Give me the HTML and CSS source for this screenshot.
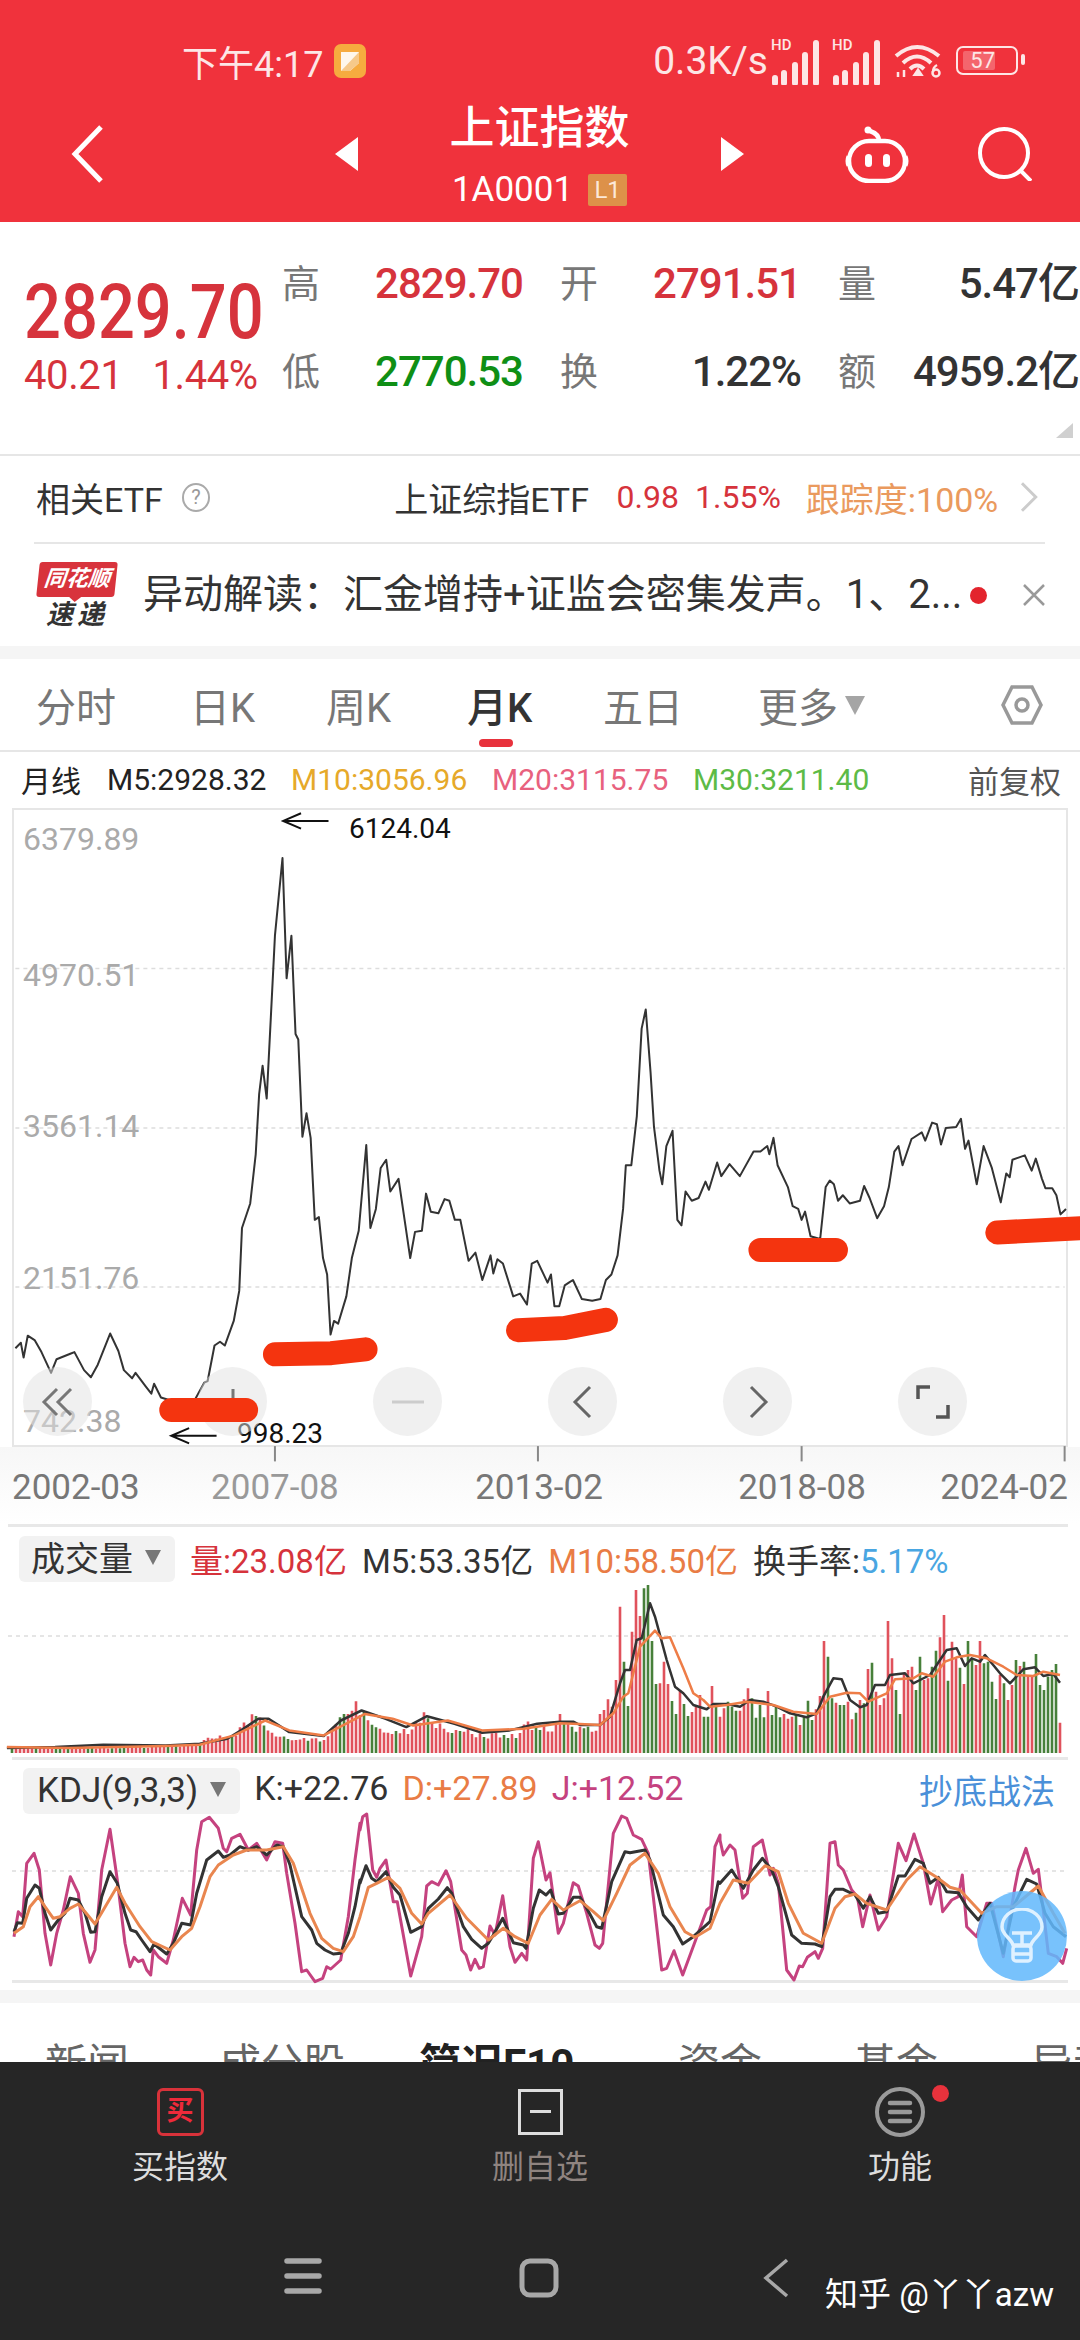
FILE: index.html
```html
<!DOCTYPE html>
<html lang="zh-CN">
<head>
    <meta charset="UTF-8">
    <title>上证指数</title>
    <link rel="stylesheet" href="styles.css">
</head>
<body>

<div class="page">
    <header class="top">
        <div class="status">
            <div class="status-left">
                <span class="clock">下午4:17</span>
                <svg class="note-icon" viewBox="0 0 32 34"><rect width="32" height="34" rx="7" fill="#f6ab3f"/><path d="M7 8h18v11l-9 8H7z" fill="#fff" opacity=".9"/><path d="M7 27l18-19v11l-9 8z" fill="#f6c98a"/></svg>
            </div>
            <div class="status-right">
                <span class="speed">0.3K/s</span>
                <svg class="signal" viewBox="0 0 50 48"><text x="0" y="13" class="hd">HD</text><path d="M4 41v5M13 36v10M24 28v18M34 18v28M45 6v40" stroke="#fde6e6" stroke-width="6" fill="none" stroke-linecap="round"/></svg>
                <svg class="signal" viewBox="0 0 50 48"><text x="0" y="13" class="hd">HD</text><path d="M4 41v5M13 36v10M24 28v18M34 18v28M45 6v40" stroke="#fde6e6" stroke-width="6" fill="none" stroke-linecap="round"/></svg>
                <svg class="wifi" viewBox="0 0 47 34" fill="none" stroke="#fde6e6" stroke-width="4"><path d="M2 12Q23-6 45 12M9 19Q23 6 37 19M16 25Q23 18 30 25"/><path d="M22 30l2-3 2 3z" fill="#fde6e6"/><path d="M4 33v-5M10 33v-7" stroke-width="2.5"/><circle cx="42" cy="29" r="3.5" stroke-width="2.5"/><path d="M39 28q0-5 4-7" stroke-width="2.5"/></svg>
                <div class="battery"><span>57</span></div>
            </div>
        </div>
        <div class="nav">
            <svg class="back" viewBox="0 0 32 58" fill="none" stroke="#fff" stroke-width="5"><path d="M30 2L4 29l26 27"/></svg>
            <svg class="tri" viewBox="0 0 23 34"><path d="M23 0v34L0 17z" fill="#fff"/></svg>
            <div class="title">
                <h1>上证指数</h1>
                <div class="code">1A0001<span class="level">L1</span></div>
            </div>
            <svg class="tri" viewBox="0 0 23 34"><path d="M0 0v34l23-17z" fill="#fff"/></svg>
            <svg class="robot" viewBox="0 0 64 57" fill="none" stroke="#fff" stroke-width="4.5"><rect x="4" y="15" width="56" height="40" rx="20"/><path d="M34 15Q34 8 25 5"/><circle cx="23" cy="4" r="3.5" fill="#fff" stroke="none"/><path d="M3 30q-2 5 0 10M61 30q2 5 0 10" stroke-width="3"/><rect x="20" y="28" width="7" height="13" rx="3.5" fill="#fff" stroke="none"/><rect x="38" y="28" width="7" height="13" rx="3.5" fill="#fff" stroke="none"/></svg>
            <svg class="search" viewBox="0 0 55 54" fill="none" stroke="#fff" stroke-width="4"><circle cx="27" cy="26" r="24"/><path d="M44 44l10 10"/></svg>
        </div>
    </header>

    <section class="quote">
        <div class="quote-main">
            <div class="price">2829.70</div>
            <div class="change"><span>40.21</span><span>1.44%</span></div>
        </div>
        <div class="quote-grid">
            <div class="stat"><span class="stat-name">高</span><span class="up">2829.70</span></div>
            <div class="stat"><span class="stat-name">开</span><span class="up">2791.51</span></div>
            <div class="stat"><span class="stat-name">量</span><span>5.47亿</span></div>
            <div class="stat"><span class="stat-name">低</span><span class="down">2770.53</span></div>
            <div class="stat"><span class="stat-name">换</span><span>1.22%</span></div>
            <div class="stat"><span class="stat-name">额</span><span>4959.2亿</span></div>
        </div>
        <div class="corner"></div>
    </section>

    <section class="etf">
        <span class="etf-name">相关ETF</span>
        <span class="help">?</span>
        <span class="etf-fund">上证综指ETF</span>
        <span class="up etf-num">0.98</span>
        <span class="up etf-num">1.55%</span>
        <span class="etf-track">跟踪度:100%</span>
        <svg class="etf-more" viewBox="0 0 18 30" fill="none" stroke="#ccc" stroke-width="3"><path d="M2 1l14 14L2 29"/></svg>
    </section>

    <section class="news">
        <div class="logo">
            <span class="logo-flag"><span>同花顺</span></span>
            <span class="logo-sub">速递</span>
        </div>
        <p class="news-text">异动解读：汇金增持+证监会密集发声。1、2...</p>
        <span class="dot"></span>
        <svg class="close" viewBox="0 0 22 22" fill="none" stroke="#999" stroke-width="2.5"><path d="M1 1l20 20M21 1L1 21"/></svg>
    </section>

    <div class="band"></div>

    <nav class="periods">
        <span class="period p1">分时</span>
        <span class="period p2">日K</span>
        <span class="period p3">周K</span>
        <span class="period p4 active">月K</span>
        <span class="period p5">五日</span>
        <span class="period p6">更多<i class="caret"></i></span>
        <svg class="hex" viewBox="0 0 42 40" fill="none" stroke="#999" stroke-width="3.5"><path d="M11 2h20l9 18-9 18H11L2 20z"/><circle cx="21" cy="20" r="6"/></svg>
    </nav>

    <div class="ma-row">
        <span class="ma-title">月线</span>
        <span class="ma m5">M5:2928.32</span>
        <span class="ma m10">M10:3056.96</span>
        <span class="ma m20">M20:3115.75</span>
        <span class="ma m30">M30:3211.40</span>
        <span class="adjust">前复权</span>
    </div>

    <div class="chart">
        <svg id="main-chart" class="plot" viewBox="18 270 1532 1162" preserveAspectRatio="none"></svg>
        <span class="axis-y" style="top:10px">6379.89</span>
        <span class="axis-y" style="top:146px">4970.51</span>
        <span class="axis-y" style="top:297px">3561.14</span>
        <span class="axis-y" style="top:449px">2151.76</span>
        <span class="axis-y" style="top:592px">742.38</span>
        <span class="note" style="left:335px;top:3px">6124.04</span>
        <span class="note" style="left:223px;top:608px">998.23</span>
        <div class="chart-btns">
            <span class="round"><svg viewBox="0 0 36 36" fill="none" stroke="#777" stroke-width="3"><path d="M17 5L4 18l13 13M31 5L18 18l13 13"/></svg></span>
            <span class="round"><svg viewBox="0 0 36 36" fill="none" stroke="#777" stroke-width="3"><path d="M18 5v26M5 18h26"/></svg></span>
            <span class="round"><svg viewBox="0 0 36 36" fill="none" stroke="#ccc" stroke-width="3"><path d="M2 18h32"/></svg></span>
            <span class="round"><svg viewBox="0 0 36 36" fill="none" stroke="#666" stroke-width="3"><path d="M25 3L10 18l15 15"/></svg></span>
            <span class="round"><svg viewBox="0 0 36 36" fill="none" stroke="#666" stroke-width="3"><path d="M11 3l15 15-15 15"/></svg></span>
            <span class="round"><svg viewBox="0 0 36 36" fill="none" stroke="#555" stroke-width="3.5"><path d="M3 15V3h12M33 21v12H21"/></svg></span>
        </div>
        <svg id="marks" class="plot" viewBox="18 270 1532 1162" preserveAspectRatio="none"></svg>
    </div>

    <div class="axis-x">
        <span>2002-03</span>
        <span class="fade">2007-08</span>
        <span>2013-02</span>
        <span>2018-08</span>
        <span>2024-02</span>
    </div>

    <section class="panel vol">
        <svg id="vol-chart" class="plot" viewBox="8 1527 1060 230"></svg>
        <div class="panel-head">
            <span class="chip">成交量<i class="caret"></i></span>
            <span class="up">量:23.08亿</span>
            <span>M5:53.35亿</span>
            <span class="orange">M10:58.50亿</span>
            <span>换手率:<span class="blue">5.17%</span></span>
        </div>
    </section>

    <section class="panel kdj">
        <svg id="kdj-chart" class="plot" viewBox="12 1760 1056 220"></svg>
        <div class="panel-head">
            <span class="chip">KDJ(9,3,3)<i class="caret"></i></span>
            <span>K:+22.76</span>
            <span class="orange">D:+27.89</span>
            <span class="pink">J:+12.52</span>
            <span class="kdj-link">抄底战法</span>
        </div>
        <div class="bulb">
            <svg viewBox="0 0 44 56" fill="none" stroke="#dff1ff" stroke-width="3.5"><path d="M13 37C11 30 2 27 2 19a20 18 0 0 1 40 0c0 8-9 11-11 18z"/><path d="M12 25h20M22 25v12"/><rect x="13" y="38" width="18" height="15" rx="3"/><path d="M14 46h16"/></svg>
        </div>
    </section>

    <div class="band band-low"></div>

    <nav class="infos">
        <span class="info i1">新闻</span>
        <span class="info i2">成分股</span>
        <span class="info i3 active">简况F10</span>
        <span class="info i4">资金</span>
        <span class="info i5">基金</span>
        <span class="info i6">异动</span>
    </nav>

    <footer class="bottom">
        <div class="actions">
            <div class="action">
                <span class="buy-box">买</span>
                <span class="action-text">买指数</span>
            </div>
            <div class="action">
                <span class="del-box"></span>
                <span class="action-text muted">删自选</span>
            </div>
            <div class="action">
                <span class="more-box">
                    <svg viewBox="0 0 50 50" fill="none" stroke="#9a9a9a"><circle cx="25" cy="25" r="23" stroke-width="4"/><path d="M15 16h20M15 25h20M15 34h20" stroke-width="4.5" stroke-linecap="round"/></svg>
                    <i class="badge"></i>
                </span>
                <span class="action-text">功能</span>
            </div>
        </div>
        <div class="sysbar">
            <svg class="sys-menu" viewBox="0 0 38 36"><path d="M3 3h32M3 18h32M3 33h32" stroke="#a8a8a8" stroke-width="5.5" stroke-linecap="round"/></svg>
            <svg class="sys-home" viewBox="0 0 40 40" fill="none"><rect x="3" y="3" width="34" height="34" rx="8" stroke="#a8a8a8" stroke-width="5"/></svg>
            <svg class="sys-back" viewBox="0 0 26 40" fill="none"><path d="M24 2L3 20l21 18" stroke="#a8a8a8" stroke-width="3.5"/></svg>
            <span class="mark">知乎 @丫丫azw</span>
        </div>
    </footer>
</div>

<script src="charts.js"></script>
</body>
</html>
```

FILE: styles.css
```css
* {
    box-sizing: border-box;
}

body {
    margin: 0;
    background: #fff;
    font-family: Roboto, "Noto Sans CJK SC", sans-serif;
    color: #333;
    overflow: hidden;
}

.page {
    width: 1080px;
    height: 2340px;
    display: flex;
    flex-direction: column;
    overflow: hidden;
}

.up { color: #d6333c; }
.down { color: #0f8f15; }
.orange { color: #e97c45; }
.blue { color: #49a6e2; }
.pink { color: #c5427f; }

.caret {
    display: inline-block;
    width: 0;
    height: 0;
    border-left: 10px solid transparent;
    border-right: 10px solid transparent;
    border-top: 19px solid #a5a5a5;
}

/* Red header */
.top {
    height: 222px;
    background: #f0323c;
    color: #fff;
    display: flex;
    flex-direction: column;
}

.status {
    height: 100px;
    padding: 21px 56px 0 182px;
    display: flex;
    justify-content: space-between;
    align-items: center;
    color: #fde6e6;
}

.status-left, .status-right {
    display: flex;
    align-items: center;
}

.clock {
    font-size: 36px;
    margin-right: 11px;
}

.note-icon {
    width: 32px;
    height: 34px;
}

.speed {
    font-size: 39px;
    margin-right: 3px;
}

.signal {
    width: 50px;
    height: 48px;
    margin-right: 11px;
}

.hd {
    font-size: 15px;
    font-weight: 500;
    fill: #fde6e6;
}

.wifi {
    width: 47px;
    height: 34px;
    margin: 0 15px 0 1px;
}

.battery {
    width: 62px;
    height: 29px;
    margin-right: 6px;
    border: 2.5px solid #fde6e6;
    border-radius: 7px;
    font-size: 22px;
    position: relative;
    display: flex;
    align-items: center;
    padding-left: 5px;
}

.battery span {
    width: 32px;
    height: 19px;
    line-height: 19px;
    text-align: right;
    background: rgba(255, 255, 255, 0.25);
    border-radius: 2px;
}

.battery::after {
    content: "";
    position: absolute;
    right: -9px;
    top: 6px;
    width: 4px;
    height: 11px;
    background: #fde6e6;
    border-radius: 2px;
}

.nav {
    height: 122px;
    position: relative;
    display: flex;
    align-items: center;
    padding: 0 0 14px 71px;
}

.back {
    width: 32px;
    height: 58px;
    margin-right: 232px;
}

.tri {
    width: 23px;
    height: 34px;
}

.title {
    width: 363px;
    text-align: center;
}

.title h1 {
    margin: 0;
    font-size: 45px;
    font-weight: 500;
    line-height: 56px;
}

.code {
    margin-top: 15px;
    font-size: 35px;
    line-height: 36px;
    display: flex;
    justify-content: center;
    align-items: center;
    gap: 15px;
}

.level {
    width: 39px;
    height: 32px;
    line-height: 32px;
    background: #dd9149;
    border-radius: 2px;
    font-size: 24px;
    color: #fce8d8;
}

.robot {
    width: 64px;
    height: 57px;
    margin: 0 68px 0 101px;
}

.search {
    width: 55px;
    height: 54px;
}

/* Quote block */
.quote {
    height: 232px;
    position: relative;
    display: flex;
    padding: 38px 0 0 24px;
}

.quote-main {
    width: 258px;
    flex: none;
}

.price {
    font-size: 65px;
    font-weight: 500;
    line-height: 76px;
    color: #d6333c;
    transform: scaleY(1.16);
    transform-origin: top;
    margin-top: 8px;
    white-space: nowrap;
}

.change {
    margin-top: 10px;
    font-size: 40px;
    letter-spacing: -0.4px;
    line-height: 44px;
    color: #d6333c;
    display: flex;
    gap: 30px;
    white-space: nowrap;
}

.quote-grid {
    display: grid;
    grid-template-columns: repeat(3, 241px);
    column-gap: 37px;
    grid-auto-rows: 88px;
    font-size: 42px;
    font-weight: 500;
    letter-spacing: -1px;
    line-height: 48px;
    color: #333;
}

.stat {
    display: flex;
    justify-content: space-between;
}

.stat-name {
    color: #777;
    font-size: 38px;
    font-weight: 400;
    letter-spacing: 0;
}

.corner {
    position: absolute;
    right: 7px;
    bottom: 16px;
    width: 0;
    height: 0;
    border-left: 17px solid transparent;
    border-bottom: 15px solid #d0d0d0;
}

/* ETF row */
.etf {
    height: 88px;
    border-top: 2px solid #e6e6e6;
    display: flex;
    align-items: center;
    padding: 0 42px 4px 36px;
    font-size: 34px;
    white-space: nowrap;
}

.etf-name {
    width: 148px;
    font-size: 34px;
}

.help {
    width: 29px;
    height: 29px;
    border: 2px solid #aaa;
    border-radius: 50%;
    font-size: 20px;
    line-height: 25px;
    text-align: center;
    color: #999;
}

.etf-fund {
    margin-left: 184px;
    width: 226px;
}

.etf-num {
    margin-right: 16px;
    font-size: 32px;
}

.etf-track {
    margin-left: 9px;
    color: #ea9a5e;
}

.etf-more {
    width: 18px;
    height: 30px;
    margin-left: 22px;
}

/* News row */
.news {
    height: 104px;
    margin: 0 35px 0 34px;
    border-top: 2px solid #e6e6e6;
    display: flex;
    align-items: center;
}

.logo {
    width: 82px;
    margin-left: 2px;
    display: flex;
    flex-direction: column;
    align-items: center;
    font-style: italic;
    font-weight: 700;
}

.logo-flag {
    width: 78px;
    height: 35px;
    line-height: 33px;
    background: #d8333c;
    border-radius: 3px;
    color: #fff;
    font-size: 22px;
    text-align: center;
    white-space: nowrap;
    transform: skewX(-6deg);
    position: relative;
}

.logo-flag::after {
    content: "";
    position: absolute;
    left: 33px;
    bottom: -5px;
    border-left: 6px solid transparent;
    border-right: 6px solid transparent;
    border-top: 5px solid #d8333c;
}

.logo-sub {
    font-size: 27px;
    line-height: 28px;
    letter-spacing: 4px;
    margin-top: 4px;
    color: #333;
}

.news-text {
    margin: 0 0 0 25px;
    width: 826px;
    font-size: 40px;
    line-height: 48px;
    white-space: nowrap;
    overflow: hidden;
}

.dot {
    width: 17px;
    height: 17px;
    border-radius: 50%;
    background: #e3242d;
    margin-left: 1px;
}

.close {
    width: 22px;
    height: 22px;
    margin-left: 36px;
}

.band {
    height: 13px;
    background: #f5f5f5;
}

/* Period tabs */
.periods {
    height: 93px;
    position: relative;
    border-bottom: 2px solid #e6e6e6;
    font-size: 40px;
    color: #777;
    display: flex;
    align-items: center;
    padding-left: 36px;
}

.period {
    white-space: nowrap;
    flex: none;
}

.p1 { width: 154px; }
.p2 { width: 136px; }
.p3 { width: 141px; }
.p4 { width: 136px; }
.p5 { width: 155px; }
.p6 { width: 243px; }

.period.active {
    color: #333;
    font-weight: 500;
    position: relative;
}

.period.active::after {
    content: "";
    position: absolute;
    left: 12px;
    top: 63px;
    width: 34px;
    height: 8px;
    border-radius: 4px;
    background: #e8323c;
}

.p6 .caret {
    margin-left: 7px;
    vertical-align: 7px;
}

.hex {
    width: 42px;
    height: 40px;
}

/* MA values */
.ma-row {
    height: 54px;
    display: flex;
    align-items: center;
    font-size: 30px;
    color: #222;
    padding: 0 19px 0 21px;
    white-space: nowrap;
}

.ma-title {
    width: 86px;
}

.ma { flex: none; }
.m5 { width: 184px; color: #222; }
.m10 { width: 201px; color: #e6a92a; }
.m20 { width: 201px; color: #e8617e; }
.m30 { width: 275px; color: #5dbb46; }

.adjust {
    font-size: 31px;
    color: #555;
}

/* Main chart */
.chart {
    height: 639px;
    margin: 2px 12px 0;
    border: 2px solid #e6e6e6;
    position: relative;
}

.plot {
    position: absolute;
    left: 0;
    top: 0;
    width: 100%;
    height: 100%;
    overflow: visible;
}

.plot * {
    vector-effect: non-scaling-stroke;
}

.axis-y {
    position: absolute;
    left: 9px;
    font-size: 32px;
    line-height: 38px;
    color: #aaa;
}

.note {
    position: absolute;
    font-size: 28px;
    line-height: 32px;
    color: #111;
}

.chart-btns {
    position: absolute;
    left: 9px;
    top: 557px;
    display: flex;
    gap: 106px;
}

.round {
    width: 69px;
    height: 69px;
    border-radius: 50%;
    background: rgba(225, 225, 225, 0.5);
    display: flex;
    align-items: center;
    justify-content: center;
}

.round svg {
    width: 36px;
    height: 36px;
}

.axis-x {
    height: 77px;
    display: flex;
    justify-content: space-between;
    align-items: center;
    padding: 4px 12px 0;
    font-size: 35px;
    color: #777;
    background: linear-gradient(#f7f7f7, #fff);
}

.axis-x span { white-space: nowrap; }
.axis-x span:first-child { width: 199px; }
.axis-x span:nth-child(2) { width: 264px; }
.axis-x span:nth-child(3) { width: 263px; }
.axis-x span:nth-child(4) { width: 202px; }

.axis-x .fade {
    color: #999;
}

/* Lower panels */
.panel {
    position: relative;
    margin: 0 12px 0 8px;
    border-top: 3px solid #e8e8e8;
}

.vol { height: 233px; }

.kdj {
    height: 226px;
    margin-left: 12px;
    border-bottom: 3px solid #e8e8e8;
}

.panel-head {
    position: relative;
    display: flex;
    align-items: center;
    gap: 15px;
    font-size: 33px;
    color: #333;
    padding: 8px 0 0 11px;
    white-space: nowrap;
}

.chip {
    height: 46px;
    line-height: 46px;
    padding: 0 14px 0 12px;
    background: #f2f2f2;
    border-radius: 6px;
    font-size: 34px;
    display: flex;
    align-items: center;
}

.chip .caret {
    margin-left: 12px;
    border-left-width: 8px;
    border-right-width: 8px;
    border-top-width: 15px;
    margin-top: -3px;
    border-top-color: #777;
}

.kdj .chip {
    font-size: 35px;
    padding: 0 14px;
}

.kdj .panel-head {
    gap: 14px;
    font-size: 34px;
    align-items: flex-start;
}

.kdj-link {
    position: absolute;
    right: 13px;
    top: 5px;
    font-size: 34px;
    color: #4a90d9;
}

.bulb {
    position: absolute;
    right: 1px;
    top: 131px;
    width: 90px;
    height: 90px;
    border-radius: 50%;
    background: rgba(98, 184, 252, 0.86);
    display: flex;
    align-items: center;
    justify-content: center;
}

.bulb svg {
    width: 44px;
    height: 56px;
}

.band-low {
    margin-top: 7px;
}

/* Info tabs, cut off by the bottom bar */
.infos {
    height: 59px;
    overflow: hidden;
    display: flex;
    align-items: flex-start;
    font-size: 42px;
    line-height: 56px;
    color: #666;
    padding: 34px 0 0 45px;
    white-space: nowrap;
}

.info { flex: none; }
.i1 { width: 174px; }
.i2 { width: 200px; }
.i3 { width: 259px; font-weight: 700; color: #222; }
.i4 { width: 176px; }
.i5 { width: 177px; }

/* Dark bottom bar */
.bottom {
    flex: 1;
    background: #262626;
    display: flex;
    flex-direction: column;
}

.actions {
    height: 160px;
    display: flex;
    padding-top: 26px;
}

.action {
    width: 360px;
    display: flex;
    flex-direction: column;
    align-items: center;
}

.buy-box {
    width: 47px;
    height: 48px;
    border: 3px solid #d8323a;
    border-radius: 6px;
    color: #ee2a3a;
    font-size: 27px;
    line-height: 41px;
    font-weight: 700;
    text-align: center;
}

.del-box {
    width: 45px;
    height: 46px;
    margin-top: 1px;
    margin-bottom: 1px;
    border: 3px solid #ddd;
    position: relative;
}

.del-box::after {
    content: "";
    position: absolute;
    left: 9px;
    top: 18px;
    width: 21px;
    height: 3px;
    background: #ddd;
}

.more-box {
    width: 50px;
    height: 50px;
    margin-top: -1px;
    margin-bottom: -1px;
    position: relative;
}

.more-box svg {
    width: 50px;
    height: 50px;
}

.badge {
    position: absolute;
    left: 57px;
    top: -2px;
    width: 17px;
    height: 17px;
    border-radius: 50%;
    background: #e8323c;
}

.action-text {
    margin-top: 12px;
    font-size: 32px;
    line-height: 38px;
    color: #ddd;
}

.action-text.muted {
    color: #8f8480;
}

.sysbar {
    flex: 1;
    position: relative;
    display: flex;
    align-items: flex-start;
    padding: 36px 0 0 284px;
}

.sys-menu {
    width: 38px;
    height: 36px;
}

.sys-home {
    width: 40px;
    height: 40px;
    margin-left: 197px;
}

.sys-back {
    width: 26px;
    height: 40px;
    margin-left: 204px;
}

.mark {
    position: absolute;
    left: 825px;
    top: 55px;
    font-size: 33px;
    line-height: 36px;
    color: #fff;
}
```

FILE: charts.js
```js
// Points were read off crops of the reference, so each set keeps its crop units
const NS = 'http://www.w3.org/2000/svg';

const mainLine = [20,1255,28,1245,32,1272,38,1232,48,1240,58,1262,72,1300,80,1275,100,1265,106,1262,120,1295,130,1308,140,1285,158,1228,170,1260,178,1295,190,1310,195,1300,210,1325,218,1338,222,1320,232,1345,245,1350,262,1348,282,1348,295,1318,300,1315,310,1250,318,1243,325,1250,338,1205,346,1150,350,1035,362,990,370,900,375,790,380,738,386,798,392,650,398,500,409,358,415,578,422,500,428,680,432,690,438,868,444,825,450,870,456,1020,462,1015,468,1090,474,1120,479,1230,484,1205,490,1210,502,1160,510,1090,520,1040,531,883,537,1035,545,1000,552,925,560,910,566,968,578,945,588,1030,595,1090,602,1042,612,1040,618,972,625,1005,636,1008,645,982,652,985,660,1020,668,1020,680,1095,690,1080,700,1130,712,1085,716,1118,722,1092,730,1100,745,1160,755,1155,765,1175,772,1100,780,1095,795,1135,800,1120,805,1178,812,1178,820,1140,826,1135,832,1130,845,1165,860,1168,872,1165,880,1130,888,1120,897,1085,905,1000,909,920,917,920,925,830,932,670,938,635,945,750,950,850,958,930,962,955,968,885,977,857,984,1020,990,1030,996,968,1005,985,1015,980,1025,950,1030,965,1042,915,1048,940,1060,918,1075,940,1095,895,1105,895,1115,885,1118,900,1124,870,1130,920,1145,960,1152,995,1160,1000,1165,1020,1170,1005,1178,1050,1192,1055,1200,960,1206,948,1212,955,1218,985,1225,975,1235,990,1250,985,1256,958,1264,980,1275,1017,1285,995,1292,960,1300,895,1306,885,1312,920,1325,872,1340,860,1345,875,1355,842,1362,845,1368,882,1375,852,1390,850,1397,835,1403,890,1408,875,1420,955,1430,885,1442,925,1455,988,1463,935,1468,942,1472,910,1490,902,1500,930,1506,908,1515,945,1520,962,1530,962,1536,975,1542,1010,1550,1000];

// Hand-drawn marks on top of the chart
const redMarks = [
    [247,1368,356,1368],
    [398,1266,480,1264,530,1257],
    [752,1222,820,1218,880,1203],
    [1105,1075,1215,1075],
    [1450,1043,1575,1035]
];

// Volume, left part: coarse outline only
const volTopLeft = [10,745,130,745,240,740,290,735,300,715,340,700,365,645,375,650,385,665,400,700,440,715,470,720,490,635,520,600,530,640,560,680,590,690,615,625,640,670,700,700,750,705,765,660,800,680,820,640];
const volM5Left = [10,748,80,745,150,738,240,740,290,735,330,720,350,695,375,660,390,660,420,700,470,712,495,665,525,635,560,660,590,685,620,652,660,675,700,702,740,695,780,675];
const volM10Left = [10,745,100,748,240,742,290,738,340,710,385,665,420,695,470,710,530,645,570,660,600,680,650,665,700,695,760,690];

// Volume, right part: one bar every 4px from x=560
const volBars = 'r462 g490 r490 g500 g515 r500 g505 g500 r515 r512 r462 r450 r418 r440 r360 r140 g305 g438 r215 r90 r168 g85 g75 g243 g372 r370 r305 r372 g423 g462 r390 g432 g468 r456 r435 r405 g470 g470 r378 g430 r470 r445 g425 g440 g452 r452 r418 r385 g415 g473 g435 g472 r393 g465 g440 g472 r462 r476 r470 g465 r495 g470 g422 g480 r448 r408 r243 g290 g415 r428 g435 g435 r425 r478 g458 r420 g430 r327 g308 r395 r435 r415 r183 r295 g390 g462 r338 r330 r320 g390 g290 r360 r355 g320 g272 r232 r165 g362 r245 r295 g323 r372 g243 g300 r315 r243 g310 g305 g365 g417 r345 g370 r420 r375 g300 r318 g305 r345 r345 g282 g375 g390 g350 g330 g312 r488'.split(' ');
const volM5Right = [0,485,40,485,60,495,120,495,150,470,180,370,195,330,210,330,230,240,245,235,270,130,285,170,320,300,345,380,370,400,400,435,440,448,460,432,500,432,540,440,570,420,610,425,650,440,690,460,740,472,770,460,790,410,820,355,845,358,870,420,900,442,920,435,945,375,975,375,990,345,1035,340,1060,370,1080,360,1110,345,1160,270,1190,265,1215,318,1235,295,1260,305,1275,285,1320,340,1350,370,1390,328,1425,322,1450,348,1480,342,1500,368];
const volM10Right = [0,490,60,492,120,495,160,460,190,410,205,400,240,260,285,212,305,235,330,232,370,325,400,400,430,420,450,440,500,435,560,425,640,435,700,455,770,462,810,410,860,398,900,400,925,425,980,400,1005,358,1060,355,1085,340,1120,350,1155,305,1190,292,1230,285,1280,295,1330,320,1370,345,1420,348,1450,335,1500,345];

// KDJ, three 360px wide crops at 3x
const kdjJ = [
    [0, [42,410,55,335,68,350,80,190,102,160,118,210,135,400,152,495,170,400,190,330,211,230,235,280,250,400,270,487,285,450,305,210,330,88,352,240,375,430,390,500,402,472,415,485,428,480,440,510,452,525,460,450,475,470,500,490,520,420,547,295,572,345,590,150,605,65,628,52,655,85,670,145,680,155,695,115,720,103,745,150,770,130,800,180,825,125,848,130,860,220,885,370,905,515,920,510,945,545,968,535,980,500,992,507,1022,480,1045,350,1065,180,1080,70]],
    [360, [0,90,8,50,20,42,38,210,50,232,60,205,78,180,100,305,112,305,152,528,185,410,200,258,215,245,235,255,258,212,272,245,305,450,318,465,332,510,345,478,358,505,370,500,390,378,405,405,428,287,450,440,465,487,485,460,500,480,520,175,535,125,558,240,570,218,595,400,610,370,640,248,655,258,680,340,705,435,718,445,728,430,760,100,785,48,800,55,820,105,845,118,865,160,905,510,920,505,942,452,968,525,1005,425,1040,330,1052,320,1065,140,1080,105]],
    [720, [0,120,10,165,30,135,45,150,68,295,82,280,100,140,127,120,150,225,160,205,175,250,200,510,222,540,238,498,248,500,262,472,285,455,295,475,308,445,330,130,345,125,355,195,370,210,395,270,412,290,428,380,450,285,475,390,500,350,535,130,558,182,582,102,610,190,632,312,655,235,668,335,695,300,715,290,727,225,740,380,770,410,800,310,815,310,850,470,885,260,895,210,918,145,940,220,955,208,965,290,985,460,1010,470,1028,490,1040,445]]
];
const kdjK = [
    [0, [42,395,52,368,68,370,80,295,105,255,118,265,135,340,152,390,175,360,195,340,210,295,235,300,255,340,272,397,285,395,305,290,330,215,352,250,375,340,392,390,408,395,425,420,450,455,462,432,500,462,520,430,545,370,572,375,590,280,620,180,655,153,670,172,690,165,720,140,745,150,770,140,800,165,830,135,850,140,870,195,905,350,935,390,950,430,975,450,1000,462,1022,460,1045,400,1065,320,1080,240]],
    [360, [0,250,18,197,35,235,50,245,78,215,100,262,120,285,152,397,185,380,205,325,235,297,262,263,275,280,310,380,335,418,365,445,385,430,400,405,428,355,460,428,490,435,498,445,520,325,538,270,558,285,572,270,595,342,610,340,640,292,660,292,680,325,710,380,725,385,755,245,795,155,810,158,855,150,870,180,910,345,940,380,968,432,1000,410,1050,365,1075,245]],
    [720, [0,250,35,210,70,265,100,210,127,175,155,210,175,260,215,405,245,430,285,432,305,440,330,290,345,268,370,268,405,285,430,325,450,290,475,340,500,335,535,228,555,228,585,178,610,190,630,250,655,232,680,275,715,278,740,320,775,360,810,310,850,460,880,320,920,238,950,252,975,340,1000,380,1038,410]]
];
const kdjD = [
    [0, [42,400,70,380,90,320,115,290,135,320,160,355,180,350,210,325,235,312,255,335,285,372,310,330,350,262,375,310,420,380,455,425,510,450,545,410,575,385,600,320,630,230,655,195,700,165,740,150,800,150,850,140,880,190,930,340,965,415,1000,445,1030,455,1060,410,1080,350]],
    [360, [0,350,25,262,50,250,85,232,120,265,155,340,185,372,205,340,270,285,320,355,385,420,430,385,465,410,505,430,540,345,575,298,610,330,660,302,700,335,730,362,770,280,810,195,855,160,895,220,930,320,975,395,1005,412,1050,385,1080,310]],
    [720, [0,310,40,240,85,250,135,197,175,215,205,310,250,400,305,430,345,325,375,290,405,282,440,310,500,330,560,240,600,200,650,232,690,262,720,270,785,340,830,320,880,320,955,258,1000,340,1035,400]]
];

function addEl(svg, tag, attrs) {
    const el = document.createElementNS(NS, tag);
    for (const key in attrs) el.setAttribute(key, attrs[key]);
    svg.appendChild(el);
    return el;
}

function addLine(svg, pts, color, width) {
    addEl(svg, 'polyline', {
        points: pts.join(' '),
        fill: 'none',
        stroke: color,
        'stroke-width': width,
        'stroke-linejoin': 'round'
    });
}

function addGrid(svg, y, x1, x2) {
    addEl(svg, 'path', {
        d: `M${x1} ${y}H${x2}`,
        stroke: '#ddd',
        'stroke-width': 1.5,
        'stroke-dasharray': '4 4'
    });
}

function envelope(pts, x) {
    for (let i = 0; i < pts.length - 2; i += 2) {
        if (x <= pts[i + 2]) {
            const t = (x - pts[i]) / (pts[i + 2] - pts[i]);
            return pts[i + 1] + (pts[i + 3] - pts[i + 1]) * t;
        }
    }
    return pts[pts.length - 1];
}

// Crop units to page pixels
function toPage(pts, ox, oy, sx, sy) {
    return pts.map((v, i) => +(i % 2 ? oy + v / sy : ox + v / sx).toFixed(1));
}
const wide = (pts) => toPage(pts, 0, 1500, 1.452, 3.016);
const right = (pts) => toPage(pts, 560, 1560, 3, 3);
const kdj = (segs) => segs.flatMap(([ox, pts]) => toPage(pts, ox, 1800, 3, 3));

// Main price chart
const mainSvg = document.getElementById('main-chart');
[560, 852, 1143].forEach(y => addGrid(mainSvg, y, 20, 1548));
[398, 781, 1165, 1548].forEach(x => addEl(mainSvg, 'path', {
    d: `M${x} 1434V1462`, stroke: '#888', 'stroke-width': 2
}));
addLine(mainSvg, mainLine, '#333', 2);

const marksSvg = document.getElementById('marks');
redMarks.forEach(m => addEl(marksSvg, 'polyline', {
    points: m.join(' '), fill: 'none', stroke: '#f4340f',
    'stroke-width': 24, 'stroke-linecap': 'round', 'stroke-linejoin': 'round'
}));
addEl(marksSvg, 'path', {
    d: 'M476 290H412M436 276L410 290L436 304M313 1415H249M273 1401L247 1415L273 1429',
    fill: 'none', stroke: '#111', 'stroke-width': 2
});

// Volume bars: up and down months go in one path each
const volSvg = document.getElementById('vol-chart');
const VOL_BOTTOM = 1753;
addGrid(volSvg, 1636, 8, 1068);
let redPath = '', greenPath = '';
for (let x = 556; x > 8; x -= 4) {
    const i = x / 4;
    const top = 1500 + envelope(volTopLeft, x * 1.452) / 3.016;
    const wobble = Math.abs(Math.sin(i * 12.9898) * 43758.5453) % 1;
    const barTop = top + (VOL_BOTTOM - top) * wobble * 0.3;
    const seg = `M${x} ${VOL_BOTTOM}V${barTop.toFixed(1)}`;
    if (Math.sin(i * 0.9) + Math.sin(i * 2.3) > 0.7) greenPath += seg; else redPath += seg;
}
volBars.forEach((bar, i) => {
    const seg = `M${560 + i * 4} ${VOL_BOTTOM}V${(1560 + bar.slice(1) / 3).toFixed(1)}`;
    if (bar[0] === 'g') greenPath += seg; else redPath += seg;
});
addEl(volSvg, 'path', { d: redPath, stroke: '#e0525c', 'stroke-width': 2.6, fill: 'none' });
addEl(volSvg, 'path', { d: greenPath, stroke: '#47803a', 'stroke-width': 2.6, fill: 'none' });
addLine(volSvg, wide(volM5Left).concat(right(volM5Right)), '#333', 2.5);
addLine(volSvg, wide(volM10Left).concat(right(volM10Right)), '#ee7d47', 2.5);

// KDJ lines
const kdjSvg = document.getElementById('kdj-chart');
addGrid(kdjSvg, 1871, 12, 1068);
addLine(kdjSvg, kdj(kdjJ), '#c5427f', 3);
addLine(kdjSvg, kdj(kdjK), '#333', 3);
addLine(kdjSvg, kdj(kdjD), '#e9864f', 3);
```
